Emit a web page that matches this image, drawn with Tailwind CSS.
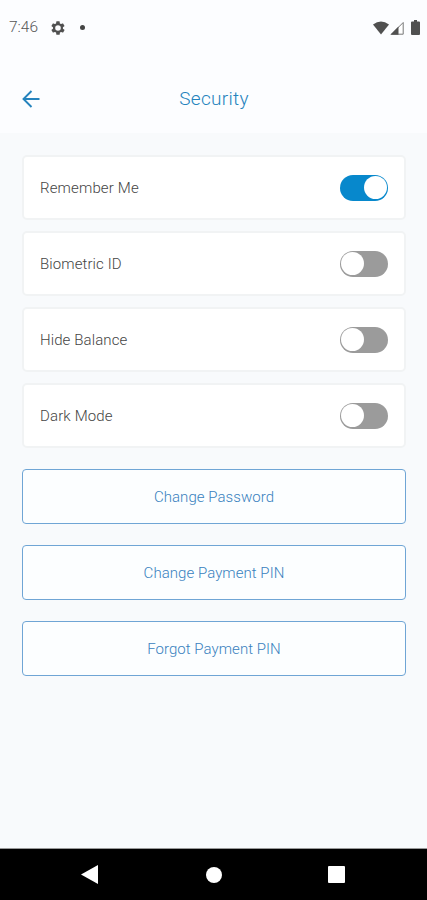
<!DOCTYPE html>
<html lang="en">
<head>
<meta charset="utf-8">
<meta name="viewport" content="width=device-width, initial-scale=1">
<title>Security</title>
<script src="https://cdn.jsdelivr.net/npm/@tailwindcss/browser@4"></script>
</head>
<body class="flex h-[900px] w-[427px] flex-col overflow-hidden bg-[#f8fafc] font-[Roboto,sans-serif] text-[#444]">
  <div class="flex h-[55px] shrink-0 items-center justify-between bg-[#fcfdff] pr-[7px] pl-[9px] text-[#505050]">
    <div class="flex items-center">
      <span class="w-[41px] pt-px text-[15.5px] font-light text-[#555]">7:46</span>
      <svg class="size-4" viewBox="0 0 24 24" fill="currentColor"><path fill-rule="evenodd" d="M19.4 13a7.500 7.500 0 0 0 0-2l2.100-1.600a.5.5 0 0 0 .1-.7l-2-3.400a.5.500 0 0 0-.6-.2l-2.500 1a7.300 7.300 0 0 0-1.700-1l-.4-2.700A.5.5 0 0 0 14 2h-4a.5.5 0 0 0-.5.400l-.4 2.700a7.600 7.600 0 0 0-1.700 1l-2.500-1a.5.500 0 0 0-.6.2l-2 3.400a.5.500 0 0 0 .1.700L4.500 11a7.500 7.500 0 0 0 0 2l-2.100 1.600a.5.5 0 0 0-.1.700l2 3.400c.1.200.4.300.6.200l2.500-1a7.300 7.300 0 0 0 1.700 1l.4 2.700c0 .2.200.4.500.4h4c.3 0 .5-.2.500-.4l.4-2.700a7.600 7.600 0 0 0 1.700-1l2.500 1c.2.100.5 0 .6-.2l2-3.400a.5.500 0 0 0-.1-.7zM12 16.200a4.200 4.200 0 1 1 0-8.400 4.200 4.200 0 0 1 0 8.400z"/></svg>
      <span class="ml-[14px] size-[5px] rounded-full bg-[#444]"></span>
    </div>
    <div class="flex items-center">
      <svg class="h-[14px] w-4" viewBox="0 0 16 14" fill="currentColor"><path d="M0 3.600Q8-2.800 16 3.600L8 13.500z"/></svg>
      <svg class="ml-px h-[14px] w-[14px]" viewBox="0 0 14 14"><path d="M1.500 13.200L13.200 1.500V13.200z" fill="#fff" stroke="#777"/><path d="M.3 13.700L8.500 5.500V13.700z" fill="#505050"/></svg>
      <svg class="ml-[7px] h-[15px] w-[9px]" viewBox="0 0 9 15" fill="currentColor"><path d="M3 0h3v1.500h2q1 0 1 1V14q0 1-1 1H1q-1 0-1-1V2.500q0-1 1-1h2z"/></svg>
    </div>
  </div>

  <header class="grid h-[78px] shrink-0 grid-cols-[1fr_auto_1fr] items-center bg-[#fcfdff] px-[22px] pt-[9px] text-[#2583bd]">
    <button class="justify-self-start" aria-label="Back">
      <svg class="h-[18px] w-[18px]" viewBox="0 0 18 18" fill="none" stroke="currentColor" stroke-width="1.900"><path d="M17.500 9H2M9.500 1L1.500 9l8 8"/></svg>
    </button>
    <h1 class="pl-px text-[19px] leading-6 font-[350] tracking-[0.3px]">Security</h1>
  </header>

  <main class="flex grow flex-col pt-[22px] pr-[21px] pl-[22px]">
    <div class="flex flex-col gap-[11px]">
      <div class="flex h-[65px] items-center justify-between rounded-[5px] border-2 border-[#f1f3f4] bg-white pr-4 pl-4">
        <span class="pt-[2px] text-[15px] font-[350] tracking-[0.15px]">Remember Me</span>
        <span class="flex h-[26px] w-12 items-center justify-end rounded-full bg-[#0788cc] p-px"><span class="size-[23px] rounded-full bg-white"></span></span>
      </div>
      <div class="flex h-[65px] items-center justify-between rounded-[5px] border-2 border-[#f1f3f4] bg-white pr-4 pl-4">
        <span class="pt-[2px] text-[15px] font-[350] tracking-[0.1px]">Biometric ID</span>
        <span class="flex h-[26px] w-12 items-center rounded-full bg-[#9b9b9b] p-px"><span class="size-[23px] rounded-full bg-white"></span></span>
      </div>
      <div class="flex h-[65px] items-center justify-between rounded-[5px] border-2 border-[#f1f3f4] bg-white pr-4 pl-4">
        <span class="pt-[2px] text-[15px] font-[350] tracking-[0.1px]">Hide Balance</span>
        <span class="flex h-[26px] w-12 items-center rounded-full bg-[#9b9b9b] p-px"><span class="size-[23px] rounded-full bg-white"></span></span>
      </div>
      <div class="flex h-[65px] items-center justify-between rounded-[5px] border-2 border-[#f1f3f4] bg-white pr-4 pl-4">
        <span class="pt-[2px] text-[15px] font-[350] tracking-[0.15px]">Dark Mode</span>
        <span class="flex h-[26px] w-12 items-center rounded-full bg-[#9b9b9b] p-px"><span class="size-[23px] rounded-full bg-white"></span></span>
      </div>
    </div>
    <div class="mt-[21px] flex flex-col gap-[21px] text-[15px] font-[350] tracking-[0.05px] text-[#3881be]">
      <button class="h-[55px] rounded-[4px] border border-[#6fa5d5] bg-[#fcfeff] pt-[2px]">Change Password</button>
      <button class="h-[55px] rounded-[4px] border border-[#6fa5d5] bg-[#fcfeff] pt-[2px]">Change Payment PIN</button>
      <button class="h-[55px] rounded-[4px] border border-[#6fa5d5] bg-[#fcfeff] pt-[2px]">Forgot Payment PIN</button>
    </div>
  </main>

  <nav class="flex h-[52px] shrink-0 items-center justify-between border-t border-[#999] bg-black pr-[82px] pl-[81px]">
    <svg class="h-[19px] w-[17px]" viewBox="0 0 17 19" fill="#fff"><path d="M17 0V19L0 9.500z"/></svg>
    <span class="ml-px size-4 rounded-full bg-white"></span>
    <span class="size-[17px] rounded-[1px] bg-white"></span>
  </nav>
</body>
</html>
